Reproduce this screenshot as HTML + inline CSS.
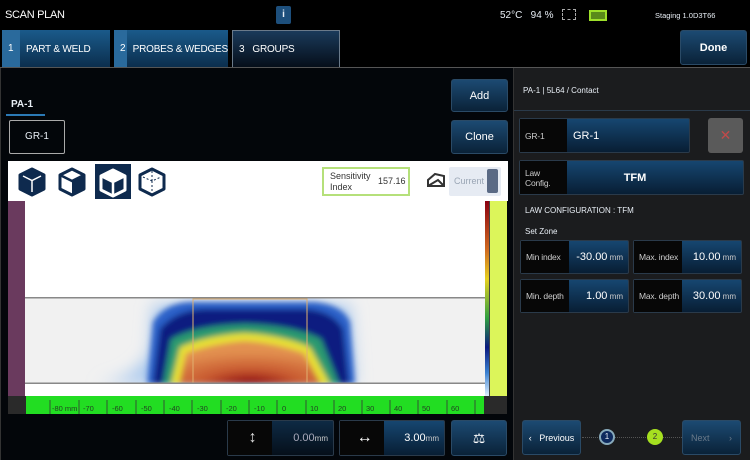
<!DOCTYPE html>
<html><head><meta charset="utf-8"><style>
*{box-sizing:border-box;margin:0;padding:0}
body{width:750px;height:460px;background:#000;font-family:"Liberation Sans",sans-serif;color:#e8eef5;position:relative;overflow:hidden;font-size:10px}
.a{position:absolute;white-space:nowrap}
.btn{position:absolute;background:linear-gradient(#1c4a72,#0a2238);border:1px solid #2a4a66;border-radius:3px;display:flex;align-items:center;justify-content:center;font-size:11px;color:#fff;white-space:nowrap}
.tab{position:absolute;top:30px;height:38px;background:linear-gradient(#1a5a8a,#0b2d4c);font-size:10px;display:flex;align-items:center;color:#fff;white-space:nowrap;letter-spacing:-0.2px}
.tab b{font-weight:normal;display:inline-block;width:18px;height:100%;background:#2a6a9c;padding-left:6px;line-height:38px;margin-right:6px}
.fld{position:absolute;height:34px;border:1px solid #2a3a4a;border-radius:2px;background:linear-gradient(#164670,#081e34);display:flex;align-items:center;font-size:11px;white-space:nowrap}
.fld .l{height:100%;background:#070707;display:flex;align-items:center;padding-left:5px;font-size:8.5px;color:#ccc;letter-spacing:-0.2px}
.fld .v{flex:1;text-align:right;padding-right:5px;font-size:11px;color:#fff}
.fld .v small{font-size:8px;color:#ccc}
</style></head><body>
<div class="a" style="left:5px;top:9px;font-size:11px;color:#fff;letter-spacing:-0.3px">SCAN PLAN</div>
<div class="a" style="left:276px;top:6px;width:15px;height:18px;background:#1d4f7c;border-radius:2px;font-size:10px;font-weight:bold;text-align:center;line-height:18px">i</div>
<div class="a" style="left:500px;top:10px;font-size:10px">52°C&nbsp;&nbsp; 94 %</div>
<div class="a" style="left:562px;top:9px;width:14px;height:11px;border:1px dashed #aaa"></div>
<div class="a" style="left:589px;top:10px;width:18px;height:11px;border:2px solid #9ee02a;background:#5a8a1a"></div>
<div class="a" style="left:655px;top:11px;font-size:7.5px">Staging 1.0D3T66</div>

<div class="tab" style="left:2px;width:108px"><b>1</b>PART &amp; WELD</div>
<div class="tab" style="left:114px;width:114px"><b>2</b>PROBES &amp; WEDGES</div>
<div class="tab" style="left:232px;width:108px;background:linear-gradient(#1a3a5a,#050d18);border:1px solid #6a7a8a;border-bottom:none"><span style="margin-left:6px;margin-right:8px">3</span>GROUPS</div>
<div class="btn" style="left:680px;top:30px;width:67px;height:35px;font-weight:bold">Done</div>

<div class="a" style="left:0;top:67px;width:750px;height:1px;background:#555"></div>
<div class="a" style="left:0;top:68px;width:513px;height:392px;background:#03060a;border-left:1px solid #333"></div>
<div class="a" style="left:513px;top:68px;width:237px;height:392px;background:#1b1c1e;border-left:1px solid #333"></div>

<div class="a" style="left:11px;top:99px;font-size:10px;font-weight:bold">PA-1</div>
<div class="a" style="left:6px;top:114px;width:39px;height:2px;background:#2b79b5"></div>
<div class="a" style="left:9px;top:120px;width:56px;height:34px;border:1px solid #aaa;border-radius:2px;font-size:10px;text-align:center;line-height:32px">GR-1</div>
<div class="btn" style="left:451px;top:79px;width:57px;height:33px">Add</div>
<div class="btn" style="left:451px;top:120px;width:57px;height:34px">Clone</div>

<div class="a" style="left:8px;top:161px;width:500px;height:40px;background:#fff"></div>
<svg class="a" style="left:16px;top:163px" width="150" height="36" viewBox="0 0 150 36">
<path d="M16 6 L28 12 L28 26 L16 32 L4 26 L4 12Z" fill="#0e2a4e" stroke="#0e2a4e" stroke-width="3" stroke-linejoin="round"/>
<path d="M7 13 L16 17.5 L25 13 M16 17.5 V29" fill="none" stroke="#fff" stroke-width="1.5"/>
<path d="M56 6 L68 12 L68 26 L56 32 L44 26 L44 12Z" fill="none" stroke="#0e2a4e" stroke-width="3" stroke-linejoin="round"/>
<path d="M68 12 L56 18 L56 32 L68 26Z" fill="#0e2a4e"/>
<path d="M44 12 L56 18 L68 12" fill="none" stroke="#0e2a4e" stroke-width="2.5"/>
<rect x="79" y="1" width="36" height="35" fill="#0e2a4e"/>
<path d="M97 7 L109 13 L109 27 L97 33 L85 27 L85 13Z" fill="none" stroke="#fff" stroke-width="3" stroke-linejoin="round"/>
<path d="M85 13 L97 19 L109 13 M97 19 V33" fill="none" stroke="#fff" stroke-width="2.5"/>
<path d="M97 7 L109 13 L97 19 L85 13Z" fill="#fff"/>
<path d="M136 6 L148 12 L148 26 L136 32 L124 26 L124 12Z" fill="none" stroke="#0e2a4e" stroke-width="3" stroke-linejoin="round"/>
<path d="M127 14 L136 18 L145 14 M136 18 V30 M136 8 V18" fill="none" stroke="#0e2a4e" stroke-width="1" stroke-dasharray="2 2"/>
</svg>
<div class="a" style="left:322px;top:167px;width:88px;height:29px;border:2px solid #b5e07a;font-size:9px;color:#333;line-height:11px;padding:2px 6px">Sensitivity<br>Index<span class="a" style="left:54px;top:7px;font-size:9px">157.16</span></div>
<svg class="a" style="left:426px;top:172px" width="20" height="16"><path d="M2 14 L2 8 L9 2 L18 4 L18 14Z M2 14 L12 8 L18 14" fill="#fff" stroke="#333" stroke-width="2"/></svg>
<div class="a" style="left:449px;top:167px;width:52px;height:29px;background:#e6ebf3;border-radius:2px;font-size:9px;color:#9aa6b5;padding:9px 5px">Current</div>
<div class="a" style="left:487px;top:169px;width:11px;height:24px;background:#5a6a85;border-radius:2px"></div>

<div class="a" style="left:8px;top:201px;width:17px;height:195px;background:#6a3a5e"></div>
<div class="a" style="left:25px;top:201px;width:460px;height:96px;background:#fff"></div>
<div class="a" style="left:25px;top:297px;width:460px;height:86px;background:#f1f1f1"></div>
<div class="a" style="left:25px;top:383px;width:460px;height:13px;background:#fff"></div>
<div class="a" style="left:485px;top:201px;width:4px;height:195px;background:linear-gradient(#8a0010,#d06a20 25%,#e6d020 40%,#30a040 60%,#0a1a80 75%,#3a80d0 88%,#e0f0ff)"></div>
<div class="a" style="left:489px;top:201px;width:18px;height:195px;background:#dcf55a;border-left:1px solid #444"></div>
<div class="a" style="left:8px;top:396px;width:18px;height:18px;background:#2a2a2a"></div>
<div class="a" style="left:26px;top:396px;width:458px;height:18px;background:#22dd22"></div>
<svg class="a" style="left:26px;top:396px" width="458" height="18" font-family="Liberation Sans" font-size="7.5" fill="#224422">
<text x="26" y="15">-80 mm</text><text x="57" y="15">-70</text><text x="86" y="15">-60</text><text x="115" y="15">-50</text><text x="143" y="15">-40</text><text x="171" y="15">-30</text><text x="200" y="15">-20</text><text x="228" y="15">-10</text><text x="256" y="15">0</text><text x="284" y="15">10</text><text x="312" y="15">20</text><text x="340" y="15">30</text><text x="368" y="15">40</text><text x="396" y="15">50</text><text x="425" y="15">60</text>
<g stroke="#335533" stroke-width="1"><path d="M24 4V18M53 4V18M81 4V18M110 4V18M138 4V18M166 4V18M195 4V18M223 4V18M251 4V18M280 4V18M308 4V18M336 4V18M364 4V18M392 4V18M421 4V18M449 4V18"/></g>
</svg>
<div class="a" style="left:484px;top:396px;width:23px;height:18px;background:#2a2a2a"></div>

<svg class="a" style="left:25px;top:297px" width="460" height="87" viewBox="0 0 460 87">
<defs><filter id="b"><feGaussianBlur stdDeviation="3"/></filter><filter id="c"><feGaussianBlur stdDeviation="8"/></filter><radialGradient id="r" cx="0.5" cy="1" r="0.75"><stop offset="0" stop-color="#8a0a10"/><stop offset="0.45" stop-color="#c85a30"/><stop offset="1" stop-color="#e29050"/></radialGradient></defs>
<path d="M70 87 C100 84 115 72 125 55 L128 8 L325 8 L330 87Z" fill="#a8c8ee" filter="url(#c)"/>
<g filter="url(#b)">
<path d="M122 87 L128 25 Q140 6 165 5 L290 5 Q318 8 325 25 L330 87Z" fill="#2a60c8"/>
<path d="M128 87 L135 32 Q150 14 178 12 L280 12 Q308 14 318 32 L324 87Z" fill="#0a1f80"/>
<path d="M138 87 L146 42 Q172 28 220 27 Q268 28 296 42 L314 87Z" fill="#2a9a70"/>
<path d="M146 87 L155 50 Q183 38 220 36 Q257 38 285 50 L305 87Z" fill="#e8e030"/>
<path d="M154 87 L161 56 Q190 46 220 44 Q250 46 279 56 L296 87Z" fill="url(#r)"/>
</g>
<rect x="168" y="2" width="114" height="84" fill="none" stroke="#e0b070" stroke-width="1"/>
<rect x="0" y="0" width="460" height="1.5" fill="#888"/>
<rect x="0" y="85.5" width="460" height="1.5" fill="#888"/>
</svg>

<div class="fld" style="left:227px;top:420px;width:107px;height:36px;background:linear-gradient(#0e2a44,#050f1a)"><div class="l" style="width:44px;justify-content:center;font-size:16px;color:#ddd">↕</div><div class="v" style="color:#aab">0.00<small>mm</small></div></div>
<div class="fld" style="left:339px;top:420px;width:106px;height:36px"><div class="l" style="width:44px;justify-content:center;font-size:16px;color:#fff">↔</div><div class="v">3.00<small>mm</small></div></div>
<div class="btn" style="left:451px;top:420px;width:56px;height:36px;font-size:14px">⚖</div>

<div class="a" style="left:523px;top:86px;font-size:8px">PA-1 | 5L64 / Contact</div>
<div class="a" style="left:514px;top:110px;width:236px;height:1px;background:#2a3a4a"></div>
<div class="fld" style="left:519px;top:118px;width:171px;height:35px"><div class="l" style="width:47px">GR-1</div><div class="v" style="text-align:left;padding-left:6px">GR-1</div></div>
<div class="a" style="left:708px;top:118px;width:35px;height:35px;background:#5a5a5a;border-radius:3px;color:#c04a4a;font-size:14px;text-align:center;line-height:35px">✕</div>
<div class="fld" style="left:519px;top:160px;width:225px;height:35px"><div class="l" style="width:47px;line-height:10px">Law<br>Config.</div><div class="v" style="text-align:center;padding-right:40px;font-weight:bold">TFM</div></div>
<div class="a" style="left:525px;top:206px;font-size:8px">LAW CONFIGURATION : TFM</div>
<div class="a" style="left:525px;top:227px;font-size:8px">Set Zone</div>
<div class="fld" style="left:520px;top:240px;width:109px"><div class="l" style="width:48px">Min index</div><div class="v">-30.00<small> mm</small></div></div>
<div class="fld" style="left:633px;top:240px;width:109px"><div class="l" style="width:48px">Max. index</div><div class="v">10.00<small> mm</small></div></div>
<div class="fld" style="left:520px;top:279px;width:109px"><div class="l" style="width:48px">Min. depth</div><div class="v">1.00<small> mm</small></div></div>
<div class="fld" style="left:633px;top:279px;width:109px"><div class="l" style="width:48px">Max. depth</div><div class="v">30.00<small> mm</small></div></div>

<div class="btn" style="left:522px;top:420px;width:59px;height:35px;font-size:9px">‹&nbsp;&nbsp; Previous</div>
<div class="a" style="left:582px;top:437px;width:100px;border-top:1px dotted #555"></div>
<div class="a" style="left:599px;top:429px;width:16px;height:16px;border-radius:50%;background:#0e2a5e;border:2px solid #8ab;font-size:8px;text-align:center;line-height:12px">1</div>
<div class="a" style="left:647px;top:429px;width:16px;height:16px;border-radius:50%;background:#a6e020;color:#333;font-size:8px;text-align:center;line-height:16px">2</div>
<div class="btn" style="left:682px;top:420px;width:59px;height:35px;font-size:9px;color:#6a7a8a;justify-content:space-between;padding:0 8px"><span>Next</span><span>›</span></div>
</body></html>
